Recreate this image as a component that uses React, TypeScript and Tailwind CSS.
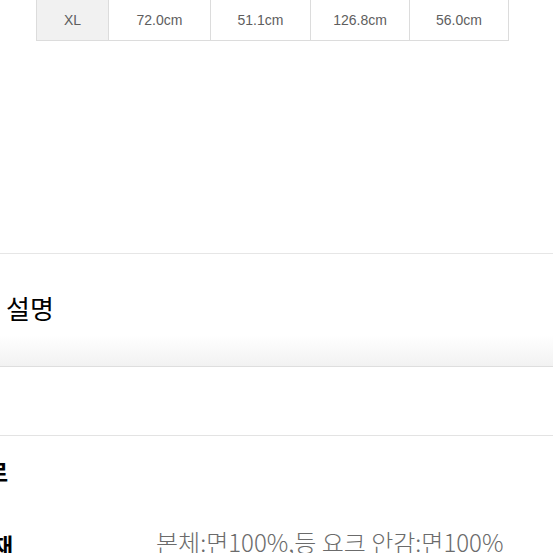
import React from 'react';

const sizeRow = [
  { label: 'XL', w: 'w-[72px]', head: true },
  { label: '72.0cm', w: 'w-[102px]' },
  { label: '51.1cm', w: 'w-[100px]' },
  { label: '126.8cm', w: 'w-[99px]' },
  { label: '56.0cm', w: 'w-[100px]', last: true },
];

export default function App() {
  return (
    <div className="w-[553px] h-[553px] overflow-hidden bg-white font-['Noto_Sans_CJK_KR',sans-serif] text-black">
      {/* size table, last row */}
      <div className="pl-[36px] -mt-px">
        <div className="flex h-[42px] border-b border-[#dcdcdc] w-max font-['Liberation_Sans',Arial,sans-serif] text-[14px] text-[#5e5e5e]">
          {sizeRow.map((c, i) => (
            <div
              key={i}
              className={`${c.w} flex items-center justify-center pt-px border-l border-[#dcdcdc] ${c.head ? 'bg-[#f1f1f1]' : 'bg-white'} ${c.last ? 'border-r' : ''}`}
            >
              {c.label}
            </div>
          ))}
        </div>
      </div>

      {/* description tab */}
      <div className="mt-[212px] border-t border-[#e6e6e6]">
        <div className="pl-[6px] pt-[41px] text-[26px] leading-none">설명</div>
        <div className="mt-[14px] h-[31px] bg-gradient-to-b from-white to-[#f2f2f2]" />
        <div className="border-b border-[#dedede]" />
      </div>

      {/* info section */}
      <div className="mt-[68px] border-t border-[#e3e3e3]">
        <div className="pt-[24px] -ml-[13px] text-[23px] font-bold leading-none">로</div>
        <div className="mt-[46px] flex items-start">
          <div className="-ml-[8px] w-[164px] pt-[5px] text-[23px] font-bold leading-none">재</div>
          <div className="pt-[1px] text-[24px] leading-none font-light text-[#6b6b6b] whitespace-nowrap">본체:면100%,등 요크 안감:면100%</div>
        </div>
      </div>
    </div>
  );
}
